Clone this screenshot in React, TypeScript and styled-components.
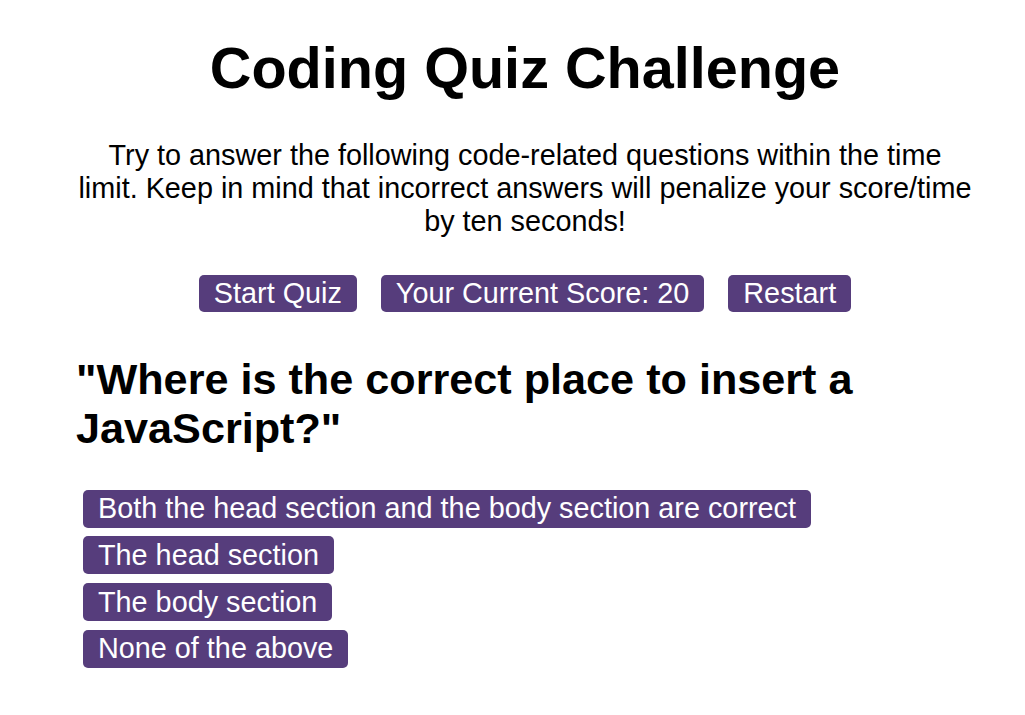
import React from "react";
import styled, { createGlobalStyle } from "styled-components";

const GlobalStyle = createGlobalStyle`
  html, body {
    margin: 0;
    padding: 0;
    background: #ffffff;
  }
  body {
    font-family: "Liberation Sans", Arial, sans-serif;
    font-size: 28.8px;
    color: #000000;
  }
`;

const Page = styled.main`
  width: 896px;
  margin-left: 77px;
  padding-top: 35px;
  display: flex;
  flex-direction: column;
`;

const Title = styled.h1`
  margin: 0;
  font-size: 57.6px;
  font-weight: 700;
  line-height: normal;
  text-align: center;
`;

const Intro = styled.p`
  margin: 37.5px 0 0;
  font-size: 28.8px;
  line-height: normal;
  text-align: center;
`;

const Controls = styled.div`
  margin-top: 37px;
  display: flex;
  justify-content: center;
  gap: 24px;
`;

const PurpleButton = styled.button<{ $tall?: boolean }>`
  appearance: none;
  border: none;
  margin: 0;
  background: #563d7c;
  color: #ffffff;
  font-family: "Liberation Sans", Arial, sans-serif;
  font-size: 28.8px;
  line-height: normal;
  padding: ${(p) => (p.$tall ? "2.5px 15px" : "2px 15px")};
  border-radius: 5px;
  cursor: pointer;
  white-space: nowrap;
`;

const Question = styled.h2`
  margin: 43.5px 0 0 -1px;
  font-size: 43.2px;
  font-weight: 700;
  line-height: normal;
  text-align: left;
`;

const Answers = styled.div`
  margin-top: 36.8px;
  padding-left: 6px;
  display: flex;
  flex-direction: column;
  align-items: flex-start;
  gap: 8.7px;
`;

const answers = [
  "Both the head section and the body section are correct",
  "The head section",
  "The body section",
  "None of the above",
];

export default function App() {
  return (
    <>
      <GlobalStyle />
      <Page>
        <Title>Coding Quiz Challenge</Title>
        <Intro>
          Try to answer the following code-related questions within the time
          limit. Keep in mind that incorrect answers will penalize your
          score/time by ten seconds!
        </Intro>
        <Controls>
          <PurpleButton>Start Quiz</PurpleButton>
          <PurpleButton>Your Current Score: 20</PurpleButton>
          <PurpleButton>Restart</PurpleButton>
        </Controls>
        <Question>"Where is the correct place to insert a JavaScript?"</Question>
        <Answers>
          {answers.map((a) => (
            <PurpleButton $tall key={a}>
              {a}
            </PurpleButton>
          ))}
        </Answers>
      </Page>
    </>
  );
}
